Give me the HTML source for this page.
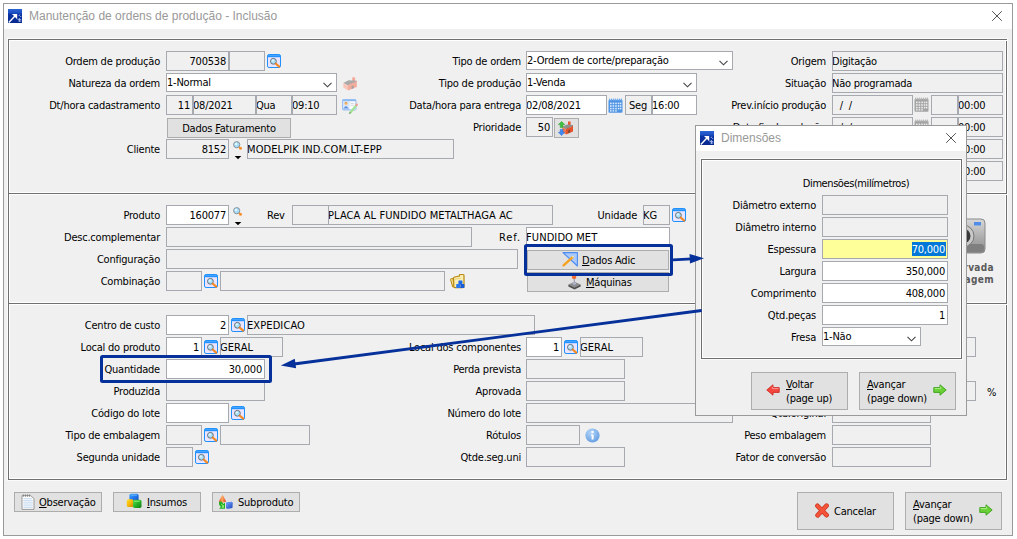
<!DOCTYPE html><html lang="pt-BR"><head><meta charset="utf-8"><title>Manutenção de ordens de produção - Inclusão</title><style>
html,body{margin:0;padding:0}
body{width:1017px;height:539px;background:#fff;position:relative;overflow:hidden;font-family:"DejaVu Sans Condensed", "Liberation Sans", sans-serif;font-size:11px;color:#000}
div,svg{position:absolute;box-sizing:border-box}
.win{border:1px solid #9a9a9a;background:#f0f0f0}
.tb{background:#fff}
.tt{font-family:"Liberation Sans",sans-serif;font-size:12px;color:#999;white-space:nowrap}
.pn{border:1px solid #6f6f6f;box-shadow:0 0 0 1px #fbfbfb, inset 0 0 0 1px #fff}
.dv{background:linear-gradient(#fff 0,#fff 1px,#6f6f6f 1px,#6f6f6f 2px,#fff 2px,#fff 3px)}
.lb{text-align:right;white-space:nowrap;letter-spacing:-0.22px}
.lt{white-space:nowrap;letter-spacing:-0.22px}
.fd{border:1px solid #a6a9af;background:#f0f0f0;padding:0 2px 0 0;text-indent:-1px;white-space:nowrap;overflow:hidden;letter-spacing:-0.22px}
.fd.w{background:#fff}
.fd.r{text-align:right;text-indent:0}
.fd.u{letter-spacing:0.1px}
.cb{padding-left:0;text-indent:0}
.chev{right:4px;top:7.6px}
.ref{letter-spacing:0.9px}
.bt{border:1px solid #adadad;background:#e1e1e1;white-space:nowrap;letter-spacing:-0.22px}
.bt span{position:absolute;white-space:nowrap}
u{text-decoration:underline;text-underline-offset:1px}
.ic{overflow:visible}
.hl{border:3px solid #06309a;border-radius:2.5px}
</style></head><body>
<div class="win" style="left:3px;top:3px;width:1010px;height:533px"></div>
<div class="tb" style="left:4px;top:4px;width:1008px;height:25px"></div>
<svg class="ic" style="left:8px;top:9px" width="14" height="14" viewBox="0 0 14 14"><defs><linearGradient id="ag" x1="0" y1="0" x2="0" y2="1"><stop offset="0" stop-color="#2a66d6"/><stop offset="0.3" stop-color="#1a4cc0"/><stop offset="0.36" stop-color="#0a34a4"/><stop offset="1" stop-color="#08288e"/></linearGradient></defs>
<rect width="14" height="14" fill="url(#ag)"/>
<path d="M0.8 13.4 L7.4 6.6" stroke="#fff" stroke-width="1.4"/><path d="M4 5 H9.2 V10.2 Z" fill="#fff"/>
<path d="M11 7 l0.8 -1.4 M12.2 8 l1 -1 M9.6 10.4 h3.6 M10.4 12 h3 M11.4 9 v4" stroke="#a9c0f0" stroke-width="0.9" fill="none"/></svg>
<div class="tt" style="left:29px;top:8px;line-height:16px">Manutenção de ordens de produção - Inclusão</div>
<svg class="ic" style="left:992px;top:11px" width="10" height="10" viewBox="0 0 10 10"><path d="M0.2 0.2 L9.8 9.8 M9.8 0.2 L0.2 9.8" stroke="#555" stroke-width="1"/></svg>
<div class="pn" style="left:8px;top:39px;width:999px;height:441px"></div>
<div class="dv" style="left:9px;top:192px;width:997px;height:3px"></div>
<div class="dv" style="left:9px;top:302px;width:997px;height:3px"></div>
<div style="left:1006px;top:40px;width:1px;height:1px;background:#fff"></div>
<div style="left:1006px;top:194px;width:1px;height:1px;background:#fff"></div>
<div style="left:1006px;top:304px;width:1px;height:1px;background:#fff"></div>
<div class="lb " style="left:-100px;top:52px;width:260px;height:20px;line-height:20px">Ordem de produção</div>
<div class="fd r" style="left:166px;top:51px;width:63px;height:20px;line-height:20px;">700538</div>
<div class="fd" style="left:229px;top:51px;width:36px;height:20px;line-height:20px;"></div>
<svg class="ic" style="left:267px;top:54px" width="14" height="14" viewBox="0 0 14 14"><rect x="0.5" y="0.5" width="13" height="13" rx="1.6" fill="#e9e4ff" stroke="#1e90ff"/>
<rect x="1" y="1" width="12" height="2.2" fill="#1e90ff"/><path d="M1.5 1.6 H12.5" stroke="#58b0ff" stroke-width="0.7"/>
<circle cx="6.4" cy="7.3" r="2.9" fill="#a9e0fa" stroke="#6a6e72" stroke-width="1"/><circle cx="5.7" cy="6.5" r="1.1" fill="#e4f7ff"/>
<path d="M8.9 9.7 L12.2 12.6" stroke="#f0801e" stroke-width="2.1" stroke-linecap="round"/><path d="M9.6 10.3 L11.6 12" stroke="#ffd83a" stroke-width="0.8" stroke-dasharray="0.8 0.8"/></svg>
<div class="lb " style="left:-100px;top:74px;width:260px;height:20px;line-height:20px">Natureza da ordem</div>
<div class="fd w cb" style="left:166px;top:73px;width:171px;height:19px;line-height:18px">1-Normal<svg class="chev" width="9" height="6" viewBox="0 0 9 6"><path d="M0.5 0.8 L4.5 4.8 L8.5 0.8" fill="none" stroke="#444" stroke-width="1.1"/></svg></div>
<svg class="ic" style="left:343px;top:77px" width="14" height="14" viewBox="0 0 14 14"><rect x="9.3" y="0.2" width="2.8" height="5" fill="#f4a696"/><rect x="9.3" y="0.2" width="2.8" height="1" fill="#f8c4b8"/>
<path d="M0.3 6 L5.6 3.2 L13.8 3.8 L13.8 5 L5 8.6 Z" fill="#a9a9a9"/>
<path d="M0.3 6 L5 8.6 L5 13.6 L0.3 10.6 Z" fill="#f8c6b8"/>
<path d="M5 8.6 L7.6 6 L7.6 7.4 L10.4 4.9 L10.4 6.2 L13.8 3.8 L13.8 10 L5 13.6 Z" fill="#f2ac9c"/>
<path d="M8.6 9.3 L10.6 8.5 L10.6 11.2 L8.6 12 Z" fill="#a0a0a0"/></svg>
<div class="lb " style="left:-100px;top:96px;width:260px;height:20px;line-height:20px">Dt/hora cadastramento</div>
<div class="fd r" style="left:166px;top:95px;width:27px;height:20px;line-height:20px;">11</div>
<div class="fd" style="left:193px;top:95px;width:63px;height:20px;line-height:20px;">08/2021</div>
<div class="fd" style="left:256px;top:95px;width:36px;height:20px;line-height:20px;">Qua</div>
<div class="fd" style="left:292px;top:95px;width:45px;height:20px;line-height:20px;">09:10</div>
<svg class="ic" style="left:342px;top:99px" width="16" height="15" viewBox="0 0 16 15"><rect x="0.5" y="0.5" width="13.5" height="10.5" rx="1" fill="#d6e6fa" stroke="#9cc0f0"/>
<rect x="0.5" y="0.5" width="13.5" height="1.6" fill="#8cbaf2"/>
<rect x="7.5" y="2.6" width="5.6" height="7.6" fill="#f9fbfd"/>
<path d="M8.5 4.5h3.6M8.5 6.3h3.6" stroke="#ccd2dc" stroke-width="0.8"/>
<circle cx="4" cy="4.8" r="1.6" fill="#f6cc9a"/><path d="M2.3 4.4 q1.7 -2.8 3.4 0" fill="#e09a3a"/>
<path d="M1.6 9.6 q2.4 -4.6 4.8 0z" fill="#5a90e4"/><rect x="0.8" y="9.4" width="6.4" height="1.2" fill="#9cc0f0"/>
<path d="M8 14 L14 6.6" stroke="#a2e292" stroke-width="2.2" stroke-linecap="round"/><circle cx="14.6" cy="5.8" r="1.3" fill="#f09a9a"/><path d="M7.4 14.6 l1 -1.4" stroke="#666" stroke-width="0.8"/></svg>
<div class="bt " style="left:167px;top:118px;width:124px;height:20px"><span style="left:0;right:0;text-align:center;top:1px;line-height:18px">Dados <u>F</u>aturamento</span></div>
<div class="lb " style="left:-100px;top:140px;width:260px;height:20px;line-height:20px">Cliente</div>
<div class="fd r" style="left:166px;top:139px;width:63px;height:20px;line-height:20px;">8152</div>
<svg class="ic" style="left:232px;top:140px" width="12" height="20" viewBox="0 0 12 20"><circle cx="4.7" cy="4.7" r="3.1" fill="#a6defa" stroke="#8a8f96" stroke-width="1"/><circle cx="4" cy="3.9" r="1.2" fill="#e6f8ff"/>
<circle cx="8.5" cy="8.3" r="1.5" fill="#f7902a"/><path d="M7 7 L8.5 8.3" stroke="#f7902a" stroke-width="1.6"/>
<path d="M2.7 15.9 L9.3 15.9 L6 19.3 Z" fill="#000"/></svg>
<div class="fd u" style="left:247px;top:139px;width:207px;height:20px;line-height:20px;">MODELPIK IND.COM.LT-EPP</div>
<div class="lb " style="left:261px;top:52px;width:260px;height:20px;line-height:20px">Tipo de ordem</div>
<div class="fd w cb" style="left:526px;top:51px;width:207px;height:19px;line-height:18px">2-Ordem de corte/preparação<svg class="chev" width="9" height="6" viewBox="0 0 9 6"><path d="M0.5 0.8 L4.5 4.8 L8.5 0.8" fill="none" stroke="#444" stroke-width="1.1"/></svg></div>
<div class="lb " style="left:261px;top:74px;width:260px;height:20px;line-height:20px">Tipo de produção</div>
<div class="fd w cb" style="left:526px;top:73px;width:171px;height:19px;line-height:18px">1-Venda<svg class="chev" width="9" height="6" viewBox="0 0 9 6"><path d="M0.5 0.8 L4.5 4.8 L8.5 0.8" fill="none" stroke="#444" stroke-width="1.1"/></svg></div>
<div class="lb " style="left:261px;top:96px;width:260px;height:20px;line-height:20px">Data/hora para entrega</div>
<div class="fd w" style="left:526px;top:95px;width:81px;height:20px;line-height:20px;">02/08/2021</div>
<svg class="ic" style="left:608px;top:98px" width="15" height="15" viewBox="0 0 15 15"><rect x="0.5" y="1.8" width="14" height="13" rx="1" fill="#4f93e3"/>
<path d="M1.6 0.6v2.4M3.6 0.6v2.4M5.6 0.6v2.4M7.6 0.6v2.4M9.6 0.6v2.4M11.6 0.6v2.4M13.4 0.6v2.4" stroke="#6aa6ea" stroke-width="1"/>
<g fill="#dcecff"><rect x="2" y="4.6" width="1.6" height="1.6"/><rect x="4.6" y="4.6" width="1.6" height="1.6"/><rect x="7.2" y="4.6" width="1.6" height="1.6"/><rect x="9.8" y="4.6" width="1.6" height="1.6"/><rect x="12" y="4.6" width="1.4" height="1.6"/>
<rect x="2" y="7.2" width="1.6" height="1.6"/><rect x="4.6" y="7.2" width="1.6" height="1.6"/><rect x="7.2" y="7.2" width="1.6" height="1.6"/><rect x="9.8" y="7.2" width="1.6" height="1.6"/><rect x="12" y="7.2" width="1.4" height="1.6"/>
<rect x="2" y="9.8" width="1.6" height="1.6"/><rect x="4.6" y="9.8" width="1.6" height="1.6"/><rect x="7.2" y="9.8" width="1.6" height="1.6"/><rect x="9.8" y="9.8" width="1.6" height="1.6"/><rect x="12" y="9.8" width="1.4" height="1.6"/>
<rect x="2" y="12.2" width="1.6" height="1.4"/><rect x="4.6" y="12.2" width="1.6" height="1.4"/><rect x="7.2" y="12.2" width="1.6" height="1.4"/></g></svg>
<div class="fd" style="left:625px;top:95px;width:27px;height:20px;line-height:20px;padding-left:4px">Seg</div>
<div class="fd w" style="left:652px;top:95px;width:45px;height:20px;line-height:20px;">16:00</div>
<div class="lb " style="left:261px;top:118px;width:260px;height:20px;line-height:20px">Prioridade</div>
<div class="fd r" style="left:526px;top:117px;width:27px;height:20px;line-height:20px;">50</div>
<div class="bt " style="left:554px;top:118px;width:25px;height:20px"></div>
<svg class="ic" style="left:558px;top:121px" width="16" height="15" viewBox="0 0 16 15"><rect x="10" y="0.5" width="2.6" height="5" fill="#e8552d"/>
<path d="M4.4 5.8 L9 3.4 L15 4 L15 5.2 L8 8.4 Z" fill="#8f8f8f"/>
<path d="M4.4 5.8 L8 8.4 L8 13.6 L4.4 11 Z" fill="#f07850"/>
<path d="M8 8.4 L10 6.4 L10 7.6 L12.4 5.6 L12.4 6.8 L15 4.6 L15 10.4 L8 13.6 Z" fill="#e4522c"/>
<path d="M10.2 9.4 L12 8.6 L12 11.4 L10.2 12.2 Z" fill="#7a4a3a"/>
<path d="M3.6 0.4 L6.8 3.6 H5 V6.6 H2.2 V3.6 H0.4 Z" fill="#3fc03f" stroke="#2a9a2a" stroke-width="0.5"/>
<path d="M3.6 14.6 L0.4 11.2 H2.2 V8.4 H5 V11.2 H6.8 Z" fill="#3f8af0" stroke="#2a6ad0" stroke-width="0.5"/></svg>
<div class="lb " style="left:566px;top:52px;width:260px;height:20px;line-height:20px">Origem</div>
<div class="fd" style="left:832px;top:51px;width:171px;height:20px;line-height:20px;">Digitação</div>
<div class="lb " style="left:566px;top:74px;width:260px;height:20px;line-height:20px">Situação</div>
<div class="fd" style="left:832px;top:73px;width:171px;height:20px;line-height:20px;">Não programada</div>
<div class="lb " style="left:566px;top:96px;width:260px;height:20px;line-height:20px">Prev.início produção</div>
<div class="lb " style="left:566px;top:118px;width:260px;height:20px;line-height:20px">Data final produção</div>
<div class="fd" style="left:832px;top:95px;width:81px;height:20px;line-height:20px;padding-left:2px">&nbsp;&nbsp;/&nbsp;&nbsp;/</div>
<svg class="ic" style="left:914px;top:97px" width="15" height="15" viewBox="0 0 15 15"><rect x="0.5" y="1.8" width="14" height="13" rx="1" fill="#a4a4a4"/>
<path d="M1.6 0.6v2.4M3.6 0.6v2.4M5.6 0.6v2.4M7.6 0.6v2.4M9.6 0.6v2.4M11.6 0.6v2.4M13.4 0.6v2.4" stroke="#b4b4b4" stroke-width="1"/>
<g fill="#ececec"><rect x="2" y="4.6" width="1.6" height="1.6"/><rect x="4.6" y="4.6" width="1.6" height="1.6"/><rect x="7.2" y="4.6" width="1.6" height="1.6"/><rect x="9.8" y="4.6" width="1.6" height="1.6"/><rect x="12" y="4.6" width="1.4" height="1.6"/>
<rect x="2" y="7.2" width="1.6" height="1.6"/><rect x="4.6" y="7.2" width="1.6" height="1.6"/><rect x="7.2" y="7.2" width="1.6" height="1.6"/><rect x="9.8" y="7.2" width="1.6" height="1.6"/><rect x="12" y="7.2" width="1.4" height="1.6"/>
<rect x="2" y="9.8" width="1.6" height="1.6"/><rect x="4.6" y="9.8" width="1.6" height="1.6"/><rect x="7.2" y="9.8" width="1.6" height="1.6"/><rect x="9.8" y="9.8" width="1.6" height="1.6"/><rect x="12" y="9.8" width="1.4" height="1.6"/>
<rect x="2" y="12.2" width="1.6" height="1.4"/><rect x="4.6" y="12.2" width="1.6" height="1.4"/><rect x="7.2" y="12.2" width="1.6" height="1.4"/></g></svg>
<div class="fd" style="left:931px;top:95px;width:27px;height:20px;line-height:20px;"></div>
<div class="fd" style="left:958px;top:95px;width:45px;height:20px;line-height:20px;">00:00</div>
<div class="fd" style="left:832px;top:117px;width:81px;height:20px;line-height:20px;padding-left:2px">&nbsp;&nbsp;/&nbsp;&nbsp;/</div>
<svg class="ic" style="left:914px;top:119px" width="15" height="15" viewBox="0 0 15 15"><rect x="0.5" y="1.8" width="14" height="13" rx="1" fill="#a4a4a4"/>
<path d="M1.6 0.6v2.4M3.6 0.6v2.4M5.6 0.6v2.4M7.6 0.6v2.4M9.6 0.6v2.4M11.6 0.6v2.4M13.4 0.6v2.4" stroke="#b4b4b4" stroke-width="1"/>
<g fill="#ececec"><rect x="2" y="4.6" width="1.6" height="1.6"/><rect x="4.6" y="4.6" width="1.6" height="1.6"/><rect x="7.2" y="4.6" width="1.6" height="1.6"/><rect x="9.8" y="4.6" width="1.6" height="1.6"/><rect x="12" y="4.6" width="1.4" height="1.6"/>
<rect x="2" y="7.2" width="1.6" height="1.6"/><rect x="4.6" y="7.2" width="1.6" height="1.6"/><rect x="7.2" y="7.2" width="1.6" height="1.6"/><rect x="9.8" y="7.2" width="1.6" height="1.6"/><rect x="12" y="7.2" width="1.4" height="1.6"/>
<rect x="2" y="9.8" width="1.6" height="1.6"/><rect x="4.6" y="9.8" width="1.6" height="1.6"/><rect x="7.2" y="9.8" width="1.6" height="1.6"/><rect x="9.8" y="9.8" width="1.6" height="1.6"/><rect x="12" y="9.8" width="1.4" height="1.6"/>
<rect x="2" y="12.2" width="1.6" height="1.4"/><rect x="4.6" y="12.2" width="1.6" height="1.4"/><rect x="7.2" y="12.2" width="1.6" height="1.4"/></g></svg>
<div class="fd" style="left:931px;top:117px;width:27px;height:20px;line-height:20px;"></div>
<div class="fd" style="left:958px;top:117px;width:45px;height:20px;line-height:20px;">00:00</div>
<div class="fd" style="left:832px;top:139px;width:81px;height:20px;line-height:20px;padding-left:2px">&nbsp;&nbsp;/&nbsp;&nbsp;/</div>
<svg class="ic" style="left:914px;top:141px" width="15" height="15" viewBox="0 0 15 15"><rect x="0.5" y="1.8" width="14" height="13" rx="1" fill="#a4a4a4"/>
<path d="M1.6 0.6v2.4M3.6 0.6v2.4M5.6 0.6v2.4M7.6 0.6v2.4M9.6 0.6v2.4M11.6 0.6v2.4M13.4 0.6v2.4" stroke="#b4b4b4" stroke-width="1"/>
<g fill="#ececec"><rect x="2" y="4.6" width="1.6" height="1.6"/><rect x="4.6" y="4.6" width="1.6" height="1.6"/><rect x="7.2" y="4.6" width="1.6" height="1.6"/><rect x="9.8" y="4.6" width="1.6" height="1.6"/><rect x="12" y="4.6" width="1.4" height="1.6"/>
<rect x="2" y="7.2" width="1.6" height="1.6"/><rect x="4.6" y="7.2" width="1.6" height="1.6"/><rect x="7.2" y="7.2" width="1.6" height="1.6"/><rect x="9.8" y="7.2" width="1.6" height="1.6"/><rect x="12" y="7.2" width="1.4" height="1.6"/>
<rect x="2" y="9.8" width="1.6" height="1.6"/><rect x="4.6" y="9.8" width="1.6" height="1.6"/><rect x="7.2" y="9.8" width="1.6" height="1.6"/><rect x="9.8" y="9.8" width="1.6" height="1.6"/><rect x="12" y="9.8" width="1.4" height="1.6"/>
<rect x="2" y="12.2" width="1.6" height="1.4"/><rect x="4.6" y="12.2" width="1.6" height="1.4"/><rect x="7.2" y="12.2" width="1.6" height="1.4"/></g></svg>
<div class="fd" style="left:931px;top:139px;width:27px;height:20px;line-height:20px;"></div>
<div class="fd" style="left:958px;top:139px;width:45px;height:20px;line-height:20px;">00:00</div>
<div class="fd" style="left:832px;top:161px;width:81px;height:20px;line-height:20px;padding-left:2px">&nbsp;&nbsp;/&nbsp;&nbsp;/</div>
<svg class="ic" style="left:914px;top:163px" width="15" height="15" viewBox="0 0 15 15"><rect x="0.5" y="1.8" width="14" height="13" rx="1" fill="#a4a4a4"/>
<path d="M1.6 0.6v2.4M3.6 0.6v2.4M5.6 0.6v2.4M7.6 0.6v2.4M9.6 0.6v2.4M11.6 0.6v2.4M13.4 0.6v2.4" stroke="#b4b4b4" stroke-width="1"/>
<g fill="#ececec"><rect x="2" y="4.6" width="1.6" height="1.6"/><rect x="4.6" y="4.6" width="1.6" height="1.6"/><rect x="7.2" y="4.6" width="1.6" height="1.6"/><rect x="9.8" y="4.6" width="1.6" height="1.6"/><rect x="12" y="4.6" width="1.4" height="1.6"/>
<rect x="2" y="7.2" width="1.6" height="1.6"/><rect x="4.6" y="7.2" width="1.6" height="1.6"/><rect x="7.2" y="7.2" width="1.6" height="1.6"/><rect x="9.8" y="7.2" width="1.6" height="1.6"/><rect x="12" y="7.2" width="1.4" height="1.6"/>
<rect x="2" y="9.8" width="1.6" height="1.6"/><rect x="4.6" y="9.8" width="1.6" height="1.6"/><rect x="7.2" y="9.8" width="1.6" height="1.6"/><rect x="9.8" y="9.8" width="1.6" height="1.6"/><rect x="12" y="9.8" width="1.4" height="1.6"/>
<rect x="2" y="12.2" width="1.6" height="1.4"/><rect x="4.6" y="12.2" width="1.6" height="1.4"/><rect x="7.2" y="12.2" width="1.6" height="1.4"/></g></svg>
<div class="fd" style="left:931px;top:161px;width:27px;height:20px;line-height:20px;"></div>
<div class="fd" style="left:958px;top:161px;width:45px;height:20px;line-height:20px;">00:00</div>
<div class="lb " style="left:-100px;top:206px;width:260px;height:20px;line-height:20px">Produto</div>
<div class="fd w r" style="left:166px;top:205px;width:63px;height:20px;line-height:20px;">160077</div>
<svg class="ic" style="left:232px;top:206px" width="12" height="20" viewBox="0 0 12 20"><circle cx="4.7" cy="4.7" r="3.1" fill="#a6defa" stroke="#8a8f96" stroke-width="1"/><circle cx="4" cy="3.9" r="1.2" fill="#e6f8ff"/>
<circle cx="8.5" cy="8.3" r="1.5" fill="#f7902a"/><path d="M7 7 L8.5 8.3" stroke="#f7902a" stroke-width="1.6"/>
<path d="M2.7 15.9 L9.3 15.9 L6 19.3 Z" fill="#000"/></svg>
<div class="lt " style="left:267px;top:206px;height:20px;line-height:20px;">Rev</div>
<div class="fd" style="left:292px;top:205px;width:37px;height:20px;line-height:20px;"></div>
<div class="fd u" style="left:328px;top:205px;width:225px;height:20px;line-height:20px;">PLACA AL FUNDIDO METALTHAGA AC</div>
<div class="lb " style="left:377px;top:206px;width:260px;height:20px;line-height:20px">Unidade</div>
<div class="fd u" style="left:643px;top:205px;width:27px;height:20px;line-height:20px;">KG</div>
<svg class="ic" style="left:672px;top:208px" width="14" height="14" viewBox="0 0 14 14"><rect x="0.5" y="0.5" width="13" height="13" rx="1.6" fill="#e9e4ff" stroke="#1e90ff"/>
<rect x="1" y="1" width="12" height="2.2" fill="#1e90ff"/><path d="M1.5 1.6 H12.5" stroke="#58b0ff" stroke-width="0.7"/>
<circle cx="6.4" cy="7.3" r="2.9" fill="#a9e0fa" stroke="#6a6e72" stroke-width="1"/><circle cx="5.7" cy="6.5" r="1.1" fill="#e4f7ff"/>
<path d="M8.9 9.7 L12.2 12.6" stroke="#f0801e" stroke-width="2.1" stroke-linecap="round"/><path d="M9.6 10.3 L11.6 12" stroke="#ffd83a" stroke-width="0.8" stroke-dasharray="0.8 0.8"/></svg>
<div class="lb " style="left:-100px;top:228px;width:260px;height:20px;line-height:20px">Desc.complementar</div>
<div class="fd" style="left:166px;top:227px;width:306px;height:20px;line-height:20px;"></div>
<div class="lb ref" style="left:261px;top:228px;width:260px;height:20px;line-height:20px">Ref.</div>
<div class="fd w u" style="left:526px;top:227px;width:144px;height:20px;line-height:20px;">FUNDIDO MET</div>
<div class="lb " style="left:-100px;top:250px;width:260px;height:20px;line-height:20px">Configuração</div>
<div class="fd" style="left:166px;top:249px;width:352px;height:20px;line-height:20px;"></div>
<div class="bt " style="left:527px;top:250px;width:142px;height:20px"><span style="left:54px;top:1px;line-height:18px"><u>D</u>ados Adic</span></div>
<svg class="ic" style="left:562px;top:252px" width="16" height="15" viewBox="0 0 16 15"><path d="M1 0.6 H15.4 V14 Z" fill="#a9c9fa" stroke="#4c8cf0" stroke-width="1.1" stroke-linejoin="round"/>
<path d="M1.6 13.4 L10.4 5.4" stroke="#f6a21e" stroke-width="2.4" stroke-linecap="round"/><path d="M9.6 4.6 L12 3.4 L11.2 6Z" fill="#fde9b8"/></svg>
<div class="lb " style="left:-100px;top:272px;width:260px;height:20px;line-height:20px">Combinação</div>
<div class="fd" style="left:166px;top:271px;width:36px;height:20px;line-height:20px;"></div>
<svg class="ic" style="left:204px;top:274px" width="14" height="14" viewBox="0 0 14 14"><rect x="0.5" y="0.5" width="13" height="13" rx="1.6" fill="#e9e4ff" stroke="#1e90ff"/>
<rect x="1" y="1" width="12" height="2.2" fill="#1e90ff"/><path d="M1.5 1.6 H12.5" stroke="#58b0ff" stroke-width="0.7"/>
<circle cx="6.4" cy="7.3" r="2.9" fill="#a9e0fa" stroke="#6a6e72" stroke-width="1"/><circle cx="5.7" cy="6.5" r="1.1" fill="#e4f7ff"/>
<path d="M8.9 9.7 L12.2 12.6" stroke="#f0801e" stroke-width="2.1" stroke-linecap="round"/><path d="M9.6 10.3 L11.6 12" stroke="#ffd83a" stroke-width="0.8" stroke-dasharray="0.8 0.8"/></svg>
<div class="fd" style="left:220px;top:271px;width:225px;height:20px;line-height:20px;"></div>
<svg class="ic" style="left:450px;top:274px" width="15" height="15" viewBox="0 0 15 15"><path d="M0.6 5.6 Q0.4 4.6 1.6 4.6 L3 4.6 L4.4 12.8 L2.6 12.8 Z" fill="#f6dc8a" stroke="#b88810" stroke-width="1"/>
<path d="M3.6 4.2 Q3.6 3.2 4.6 3 L9.4 2 L9.4 1.2 Q9.4 0.5 10.2 0.5 L13 0.5 Q14 0.5 14 1.5 L14 12.6 Q14 13.6 13 13.6 L5 13.6 Q3.8 13.6 3.8 12.4 Z" fill="#fbeeb4" stroke="#b88810" stroke-width="1.2"/>
<path d="M5 5.2 L10.8 4.2" stroke="#e8c860" stroke-width="0.8"/>
<rect x="8.4" y="6.4" width="4" height="4" rx="0.6" fill="#1f6ae8"/><rect x="6.2" y="10" width="4" height="4" rx="0.6" fill="#2a78f0"/><rect x="10.4" y="10" width="4" height="4" rx="0.6" fill="#1a5cd8"/></svg>
<div class="bt " style="left:527px;top:272px;width:142px;height:20px"><span style="left:58px;top:1px;line-height:18px"><u>M</u>áquinas</span></div>
<svg class="ic" style="left:568px;top:275px" width="13" height="15" viewBox="0 0 13 15"><path d="M0.4 9.4 L6.5 6.8 L12.6 9.4 L6.5 12.4Z" fill="#8c8c8c"/>
<path d="M0.4 9.4 V11.4 L6.5 14.6 L12.6 11.4 V9.4 L6.5 12.4Z" fill="#4e4e4e"/>
<ellipse cx="6.3" cy="8.6" rx="1.8" ry="1.1" fill="#b8c2e0"/>
<rect x="5.6" y="3" width="1.4" height="5.6" fill="#a8a8b8"/>
<circle cx="6.1" cy="1.9" r="2.2" fill="#f26a30"/></svg>
<svg class="ic" style="left:948px;top:217px" width="38" height="38" viewBox="0 0 38 38"><defs><linearGradient id="cg" x1="0" y1="0" x2="0" y2="1"><stop offset="0" stop-color="#d8d8d8"/><stop offset="0.6" stop-color="#a8a8a8"/><stop offset="1" stop-color="#8e8e8e"/></linearGradient></defs>
<rect x="1" y="2" width="36" height="34" rx="4" fill="url(#cg)" stroke="#8a8a8a"/>
<rect x="2" y="27" width="34" height="8" rx="3" fill="#7f7f7f"/>
<rect x="26" y="5" width="7" height="3.5" fill="#4f8de8"/>
<circle cx="15" cy="19" r="11" fill="#c9c9c9" stroke="#777"/>
<circle cx="15" cy="19" r="7.5" fill="#3a3a3a"/><circle cx="15" cy="19" r="4" fill="#111"/></svg>
<div style="left:914px;top:262px;width:80px;text-align:right;font-weight:bold;font-size:10px;color:#5a5a5a;line-height:12px;letter-spacing:0.35px;white-space:nowrap">Reservada<br>Imagem</div>
<div class="lb " style="left:-100px;top:316px;width:260px;height:20px;line-height:20px">Centro de custo</div>
<div class="fd w r" style="left:166px;top:315px;width:63px;height:20px;line-height:20px;">2</div>
<svg class="ic" style="left:231px;top:318px" width="14" height="14" viewBox="0 0 14 14"><rect x="0.5" y="0.5" width="13" height="13" rx="1.6" fill="#e9e4ff" stroke="#1e90ff"/>
<rect x="1" y="1" width="12" height="2.2" fill="#1e90ff"/><path d="M1.5 1.6 H12.5" stroke="#58b0ff" stroke-width="0.7"/>
<circle cx="6.4" cy="7.3" r="2.9" fill="#a9e0fa" stroke="#6a6e72" stroke-width="1"/><circle cx="5.7" cy="6.5" r="1.1" fill="#e4f7ff"/>
<path d="M8.9 9.7 L12.2 12.6" stroke="#f0801e" stroke-width="2.1" stroke-linecap="round"/><path d="M9.6 10.3 L11.6 12" stroke="#ffd83a" stroke-width="0.8" stroke-dasharray="0.8 0.8"/></svg>
<div class="fd u" style="left:247px;top:315px;width:288px;height:20px;line-height:20px;">EXPEDICAO</div>
<div class="lb " style="left:-100px;top:338px;width:260px;height:20px;line-height:20px">Local do produto</div>
<div class="fd w r" style="left:166px;top:337px;width:36px;height:20px;line-height:20px;">1</div>
<svg class="ic" style="left:204px;top:340px" width="14" height="14" viewBox="0 0 14 14"><rect x="0.5" y="0.5" width="13" height="13" rx="1.6" fill="#e9e4ff" stroke="#1e90ff"/>
<rect x="1" y="1" width="12" height="2.2" fill="#1e90ff"/><path d="M1.5 1.6 H12.5" stroke="#58b0ff" stroke-width="0.7"/>
<circle cx="6.4" cy="7.3" r="2.9" fill="#a9e0fa" stroke="#6a6e72" stroke-width="1"/><circle cx="5.7" cy="6.5" r="1.1" fill="#e4f7ff"/>
<path d="M8.9 9.7 L12.2 12.6" stroke="#f0801e" stroke-width="2.1" stroke-linecap="round"/><path d="M9.6 10.3 L11.6 12" stroke="#ffd83a" stroke-width="0.8" stroke-dasharray="0.8 0.8"/></svg>
<div class="fd u" style="left:220px;top:337px;width:63px;height:20px;line-height:20px;">GERAL</div>
<div class="lb " style="left:-100px;top:360px;width:260px;height:20px;line-height:20px">Quantidade</div>
<div class="fd w r" style="left:166px;top:359px;width:99px;height:20px;line-height:20px;">30,000</div>
<div class="lb " style="left:-100px;top:382px;width:260px;height:20px;line-height:20px">Produzida</div>
<div class="fd" style="left:166px;top:381px;width:99px;height:20px;line-height:20px;"></div>
<div class="lb " style="left:-100px;top:404px;width:260px;height:20px;line-height:20px">Código do lote</div>
<div class="fd w" style="left:166px;top:403px;width:63px;height:20px;line-height:20px;"></div>
<svg class="ic" style="left:231px;top:406px" width="14" height="14" viewBox="0 0 14 14"><rect x="0.5" y="0.5" width="13" height="13" rx="1.6" fill="#e9e4ff" stroke="#1e90ff"/>
<rect x="1" y="1" width="12" height="2.2" fill="#1e90ff"/><path d="M1.5 1.6 H12.5" stroke="#58b0ff" stroke-width="0.7"/>
<circle cx="6.4" cy="7.3" r="2.9" fill="#a9e0fa" stroke="#6a6e72" stroke-width="1"/><circle cx="5.7" cy="6.5" r="1.1" fill="#e4f7ff"/>
<path d="M8.9 9.7 L12.2 12.6" stroke="#f0801e" stroke-width="2.1" stroke-linecap="round"/><path d="M9.6 10.3 L11.6 12" stroke="#ffd83a" stroke-width="0.8" stroke-dasharray="0.8 0.8"/></svg>
<div class="lb " style="left:-100px;top:426px;width:260px;height:20px;line-height:20px">Tipo de embalagem</div>
<div class="fd" style="left:166px;top:425px;width:36px;height:20px;line-height:20px;"></div>
<svg class="ic" style="left:204px;top:428px" width="14" height="14" viewBox="0 0 14 14"><rect x="0.5" y="0.5" width="13" height="13" rx="1.6" fill="#e9e4ff" stroke="#1e90ff"/>
<rect x="1" y="1" width="12" height="2.2" fill="#1e90ff"/><path d="M1.5 1.6 H12.5" stroke="#58b0ff" stroke-width="0.7"/>
<circle cx="6.4" cy="7.3" r="2.9" fill="#a9e0fa" stroke="#6a6e72" stroke-width="1"/><circle cx="5.7" cy="6.5" r="1.1" fill="#e4f7ff"/>
<path d="M8.9 9.7 L12.2 12.6" stroke="#f0801e" stroke-width="2.1" stroke-linecap="round"/><path d="M9.6 10.3 L11.6 12" stroke="#ffd83a" stroke-width="0.8" stroke-dasharray="0.8 0.8"/></svg>
<div class="fd" style="left:220px;top:425px;width:90px;height:20px;line-height:20px;"></div>
<div class="lb " style="left:-100px;top:448px;width:260px;height:20px;line-height:20px">Segunda unidade</div>
<div class="fd" style="left:166px;top:447px;width:27px;height:20px;line-height:20px;"></div>
<svg class="ic" style="left:195px;top:450px" width="14" height="14" viewBox="0 0 14 14"><rect x="0.5" y="0.5" width="13" height="13" rx="1.6" fill="#e9e4ff" stroke="#1e90ff"/>
<rect x="1" y="1" width="12" height="2.2" fill="#1e90ff"/><path d="M1.5 1.6 H12.5" stroke="#58b0ff" stroke-width="0.7"/>
<circle cx="6.4" cy="7.3" r="2.9" fill="#a9e0fa" stroke="#6a6e72" stroke-width="1"/><circle cx="5.7" cy="6.5" r="1.1" fill="#e4f7ff"/>
<path d="M8.9 9.7 L12.2 12.6" stroke="#f0801e" stroke-width="2.1" stroke-linecap="round"/><path d="M9.6 10.3 L11.6 12" stroke="#ffd83a" stroke-width="0.8" stroke-dasharray="0.8 0.8"/></svg>
<div class="lb " style="left:261px;top:338px;width:260px;height:20px;line-height:20px">Local dos componentes</div>
<div class="fd w r" style="left:526px;top:337px;width:36px;height:20px;line-height:20px;">1</div>
<svg class="ic" style="left:564px;top:340px" width="14" height="14" viewBox="0 0 14 14"><rect x="0.5" y="0.5" width="13" height="13" rx="1.6" fill="#e9e4ff" stroke="#1e90ff"/>
<rect x="1" y="1" width="12" height="2.2" fill="#1e90ff"/><path d="M1.5 1.6 H12.5" stroke="#58b0ff" stroke-width="0.7"/>
<circle cx="6.4" cy="7.3" r="2.9" fill="#a9e0fa" stroke="#6a6e72" stroke-width="1"/><circle cx="5.7" cy="6.5" r="1.1" fill="#e4f7ff"/>
<path d="M8.9 9.7 L12.2 12.6" stroke="#f0801e" stroke-width="2.1" stroke-linecap="round"/><path d="M9.6 10.3 L11.6 12" stroke="#ffd83a" stroke-width="0.8" stroke-dasharray="0.8 0.8"/></svg>
<div class="fd u" style="left:580px;top:337px;width:63px;height:20px;line-height:20px;">GERAL</div>
<div class="lb " style="left:261px;top:360px;width:260px;height:20px;line-height:20px">Perda prevista</div>
<div class="fd" style="left:526px;top:359px;width:99px;height:20px;line-height:20px;"></div>
<div class="lb " style="left:261px;top:382px;width:260px;height:20px;line-height:20px">Aprovada</div>
<div class="fd" style="left:526px;top:381px;width:99px;height:20px;line-height:20px;"></div>
<div class="lb " style="left:261px;top:404px;width:260px;height:20px;line-height:20px">Número do lote</div>
<div class="fd" style="left:526px;top:403px;width:207px;height:20px;line-height:20px;"></div>
<div class="lb " style="left:261px;top:426px;width:260px;height:20px;line-height:20px">Rótulos</div>
<div class="fd" style="left:526px;top:425px;width:54px;height:20px;line-height:20px;"></div>
<svg class="ic" style="left:585px;top:428px" width="15" height="15" viewBox="0 0 15 15"><defs><radialGradient id="ig" cx="0.4" cy="0.3" r="0.8"><stop offset="0" stop-color="#b4d6f8"/><stop offset="1" stop-color="#5c98e0"/></radialGradient></defs>
<circle cx="7.5" cy="7.5" r="7.1" fill="url(#ig)"/>
<circle cx="7.5" cy="4" r="1.25" fill="#fff"/>
<path d="M6 6.4 H8.6 V11.6 H6.6 V7.6 H6Z" fill="#fff"/></svg>
<div class="lb " style="left:261px;top:448px;width:260px;height:20px;line-height:20px">Qtde.seg.uni</div>
<div class="fd" style="left:526px;top:447px;width:99px;height:20px;line-height:20px;"></div>
<div class="fd" style="left:832px;top:337px;width:144px;height:20px;line-height:20px;"></div>
<div class="fd" style="left:832px;top:381px;width:144px;height:20px;line-height:20px;"></div>
<div class="lt " style="left:987px;top:383px;height:20px;line-height:20px;">%</div>
<div class="lb " style="left:566px;top:404px;width:260px;height:20px;line-height:20px">Qtd.original</div>
<div class="fd" style="left:832px;top:403px;width:99px;height:20px;line-height:20px;"></div>
<div class="lb " style="left:566px;top:426px;width:260px;height:20px;line-height:20px">Peso embalagem</div>
<div class="fd" style="left:832px;top:425px;width:99px;height:20px;line-height:20px;"></div>
<div class="lb " style="left:566px;top:448px;width:260px;height:20px;line-height:20px">Fator de conversão</div>
<div class="fd" style="left:832px;top:447px;width:99px;height:20px;line-height:20px;"></div>
<div class="bt " style="left:14px;top:492px;width:88px;height:20px"><span style="left:24px;top:1px;line-height:18px"><u>O</u>bservação</span></div>
<svg class="ic" style="left:21px;top:494px" width="14" height="16" viewBox="0 0 14 16"><path d="M1 1.6 H9.6 L13 4.6 V15.4 H1Z" fill="#fdfdfd" stroke="#8e8e8e" stroke-width="0.9"/>
<path d="M2.4 4.6h8.6M2.4 6.4h9.4M2.4 8.2h9.4M2.4 10h9.4M2.4 11.8h9.4M2.4 13.6h9.4" stroke="#b8d0ec" stroke-width="0.8"/>
<path d="M2.6 0.4v2.4M4.6 0.4v2.4M6.6 0.4v2.4M8.6 0.4v2.4" stroke="#7a7a7a" stroke-width="0.8"/></svg>
<div class="bt " style="left:113px;top:492px;width:88px;height:20px"><span style="left:33px;top:1px;line-height:18px"><u>I</u>nsumos</span></div>
<svg class="ic" style="left:127px;top:493px" width="15" height="16" viewBox="0 0 15 16"><defs><linearGradient id="cb1" x1="0" y1="0" x2="1" y2="1"><stop offset="0" stop-color="#3aa0ff"/><stop offset="0.5" stop-color="#2278ee"/><stop offset="1" stop-color="#1246b8"/></linearGradient>
<linearGradient id="cb2" x1="0" y1="0" x2="1" y2="1"><stop offset="0" stop-color="#ffe030"/><stop offset="0.5" stop-color="#f6b808"/><stop offset="1" stop-color="#c88a00"/></linearGradient>
<linearGradient id="cb3" x1="0" y1="0" x2="1" y2="1"><stop offset="0" stop-color="#5ae04a"/><stop offset="0.5" stop-color="#28b428"/><stop offset="1" stop-color="#0e7a12"/></linearGradient></defs>
<rect x="2.4" y="0.8" width="9.2" height="7.6" rx="1.6" fill="url(#cb1)"/><path d="M3.4 1.6 H10.6 L9.6 2.8 H4Z" fill="#6cbcff" opacity="0.8"/>
<rect x="-0.2" y="6.3" width="6.6" height="7.8" rx="1.5" fill="url(#cb2)"/>
<rect x="6" y="6.8" width="8.5" height="8.2" rx="1.7" fill="url(#cb3)"/><path d="M7 7.8 H13.4 L12.4 9 H7.6Z" fill="#8af07a" opacity="0.7"/></svg>
<div class="bt " style="left:212px;top:492px;width:88px;height:20px"><span style="left:25px;top:1px;line-height:18px">Subproduto</span></div>
<svg class="ic" style="left:219px;top:494px" width="15" height="16" viewBox="0 0 15 16"><defs><linearGradient id="sb1" x1="0" y1="0" x2="1" y2="0"><stop offset="0" stop-color="#e83a1e"/><stop offset="0.45" stop-color="#ffb060"/><stop offset="1" stop-color="#e0321a"/></linearGradient>
<linearGradient id="sb2" x1="0" y1="0" x2="1" y2="1"><stop offset="0" stop-color="#7aa6f8"/><stop offset="1" stop-color="#1a44c0"/></linearGradient></defs>
<path d="M3.5 0.8 L7.2 7.4 Q3.5 9.4 -0.2 7.4 Z" fill="url(#sb1)"/>
<path d="M0 7.8 L2.6 7.6 L4.4 10 L6 8.6 L6 14.8 L0 14.8 L1.8 13 L0 10.6 Z" fill="#22b022"/><path d="M1.4 9.4 L3.4 12 L2.4 13.8 H5 V11.4" fill="#8ee87a"/>
<path d="M7 8.8 L12.6 7.8 L13.8 9 L13.4 14 L8 15 L7 13.8Z" fill="url(#sb2)"/><path d="M7 8.8 L12.6 7.8 L13.8 9 L8.2 10Z" fill="#5a8af0"/></svg>
<div class="bt " style="left:797px;top:492px;width:97px;height:38px"><span style="left:36px;top:1px;line-height:36px">Cancelar</span></div>
<svg class="ic" style="left:814px;top:503px" width="16" height="15" viewBox="0 0 16 15"><path d="M3.4 2.8 L12.6 12.2" stroke="#c8361e" stroke-width="4.6" stroke-linecap="round"/><path d="M12.6 2.6 L3.6 12.4" stroke="#c8361e" stroke-width="4.6" stroke-linecap="round"/>
<path d="M3.4 2.8 L12.6 12.2" stroke="#f4553a" stroke-width="3.2" stroke-linecap="round"/><path d="M12.6 2.6 L3.6 12.4" stroke="#f4553a" stroke-width="3.2" stroke-linecap="round"/></svg>
<div class="bt " style="left:905px;top:492px;width:97px;height:38px"><span style="left:7px;top:5px;line-height:14px"><u>A</u>vançar<br>(page down)</span></div>
<svg class="ic" style="left:979px;top:504px" width="14" height="12" viewBox="0 0 14 12"><path d="M0.8 3.6 H7 V0.8 L13.2 6 L7 11.2 V8.4 H0.8Z" fill="#6ad038" stroke="#3aa01a" stroke-width="0.9" stroke-linejoin="round"/><path d="M1.6 4.6 H7.6 V2.6" stroke="#b4f08c" stroke-width="0.9" fill="none"/></svg>
<div class="hl" style="left:100px;top:355px;width:172px;height:28px"></div>
<div class="hl" style="left:524px;top:244px;width:149px;height:32px"></div>
<div class="win" style="left:695px;top:125px;width:272px;height:291px"></div>
<div class="tb" style="left:696px;top:126px;width:270px;height:25px"></div>
<svg class="ic" style="left:700px;top:131px" width="14" height="14" viewBox="0 0 14 14"><defs><linearGradient id="ag2" x1="0" y1="0" x2="0" y2="1"><stop offset="0" stop-color="#2a66d6"/><stop offset="0.3" stop-color="#1a4cc0"/><stop offset="0.36" stop-color="#0a34a4"/><stop offset="1" stop-color="#08288e"/></linearGradient></defs>
<rect width="14" height="14" fill="url(#ag2)"/>
<path d="M0.8 13.4 L7.4 6.6" stroke="#fff" stroke-width="1.4"/><path d="M4 5 H9.2 V10.2 Z" fill="#fff"/>
<path d="M11 7 l0.8 -1.4 M12.2 8 l1 -1 M9.6 10.4 h3.6 M10.4 12 h3 M11.4 9 v4" stroke="#a9c0f0" stroke-width="0.9" fill="none"/></svg>
<div class="tt" style="left:721px;top:130px;line-height:16px">Dimensões</div>
<svg class="ic" style="left:946px;top:133px" width="10" height="10" viewBox="0 0 10 10"><path d="M0.2 0.2 L9.8 9.8 M9.8 0.2 L0.2 9.8" stroke="#555" stroke-width="1"/></svg>
<div class="pn" style="left:701px;top:159px;width:261px;height:200px"></div>
<div class="lt" style="left:756px;width:200px;text-align:center;top:174px;line-height:20px;letter-spacing:-0.42px">Dimensões(milímetros)</div>
<div class="lb " style="left:556px;top:196px;width:260px;height:20px;line-height:20px">Diâmetro externo</div>
<div class="fd" style="left:822px;top:195px;width:126px;height:20px;line-height:20px;"></div>
<div class="lb " style="left:556px;top:218px;width:260px;height:20px;line-height:20px">Diâmetro interno</div>
<div class="fd" style="left:822px;top:217px;width:126px;height:20px;line-height:20px;"></div>
<div class="lb " style="left:556px;top:240px;width:260px;height:20px;line-height:20px">Espessura</div>
<div class="fd r" style="left:822px;top:239px;width:126px;height:20px;line-height:20px;background:#ffff99;padding-right:1px"><span style="background:#0078d7;color:#fff;padding:1px 1px 0 0">70,000</span></div>
<div class="lb " style="left:556px;top:262px;width:260px;height:20px;line-height:20px">Largura</div>
<div class="fd w r" style="left:822px;top:261px;width:126px;height:20px;line-height:20px;">350,000</div>
<div class="lb " style="left:556px;top:284px;width:260px;height:20px;line-height:20px">Comprimento</div>
<div class="fd w r" style="left:822px;top:283px;width:126px;height:20px;line-height:20px;">408,000</div>
<div class="lb " style="left:556px;top:306px;width:260px;height:20px;line-height:20px">Qtd.peças</div>
<div class="fd w r" style="left:822px;top:305px;width:126px;height:20px;line-height:20px;">1</div>
<div class="lb " style="left:556px;top:328px;width:260px;height:20px;line-height:20px">Fresa</div>
<div class="fd w cb" style="left:822px;top:327px;width:99px;height:19px;line-height:18px">1-Não<svg class="chev" width="9" height="6" viewBox="0 0 9 6"><path d="M0.5 0.8 L4.5 4.8 L8.5 0.8" fill="none" stroke="#444" stroke-width="1.1"/></svg></div>
<div class="bt " style="left:751px;top:372px;width:97px;height:38px"><span style="left:34px;top:5px;line-height:14px"><u>V</u>oltar<br>(page up)</span></div>
<svg class="ic" style="left:766px;top:384px" width="14" height="12" viewBox="0 0 14 12"><path d="M13.2 3.6 H7 V0.8 L0.8 6 L7 11.2 V8.4 H13.2Z" fill="#f4483e" stroke="#d02a24" stroke-width="0.9" stroke-linejoin="round"/><path d="M12.4 4.6 H6.4 V2.8" stroke="#fca0a0" stroke-width="0.9" fill="none"/></svg>
<div class="bt " style="left:859px;top:372px;width:97px;height:38px"><span style="left:7px;top:5px;line-height:14px"><u>A</u>vançar<br>(page down)</span></div>
<svg class="ic" style="left:933px;top:384px" width="14" height="12" viewBox="0 0 14 12"><path d="M0.8 3.6 H7 V0.8 L13.2 6 L7 11.2 V8.4 H0.8Z" fill="#6ad038" stroke="#3aa01a" stroke-width="0.9" stroke-linejoin="round"/><path d="M1.6 4.6 H7.6 V2.6" stroke="#b4f08c" stroke-width="0.9" fill="none"/></svg>
<svg style="left:0;top:0" width="1017" height="539" viewBox="0 0 1017 539"><path d="M673 259.9 L692 258.9" stroke="#06309a" stroke-width="2.9" fill="none"/><path d="M704 258.2 L689.5 253.9 L690 263.5 Z" fill="#06309a"/><path d="M701.6 310.5 L294 364" stroke="#06309a" stroke-width="2.9" fill="none"/><path d="M280.8 365.6 L294.8 358.7 L296.1 368.3 Z" fill="#06309a"/></svg>
</body></html>
